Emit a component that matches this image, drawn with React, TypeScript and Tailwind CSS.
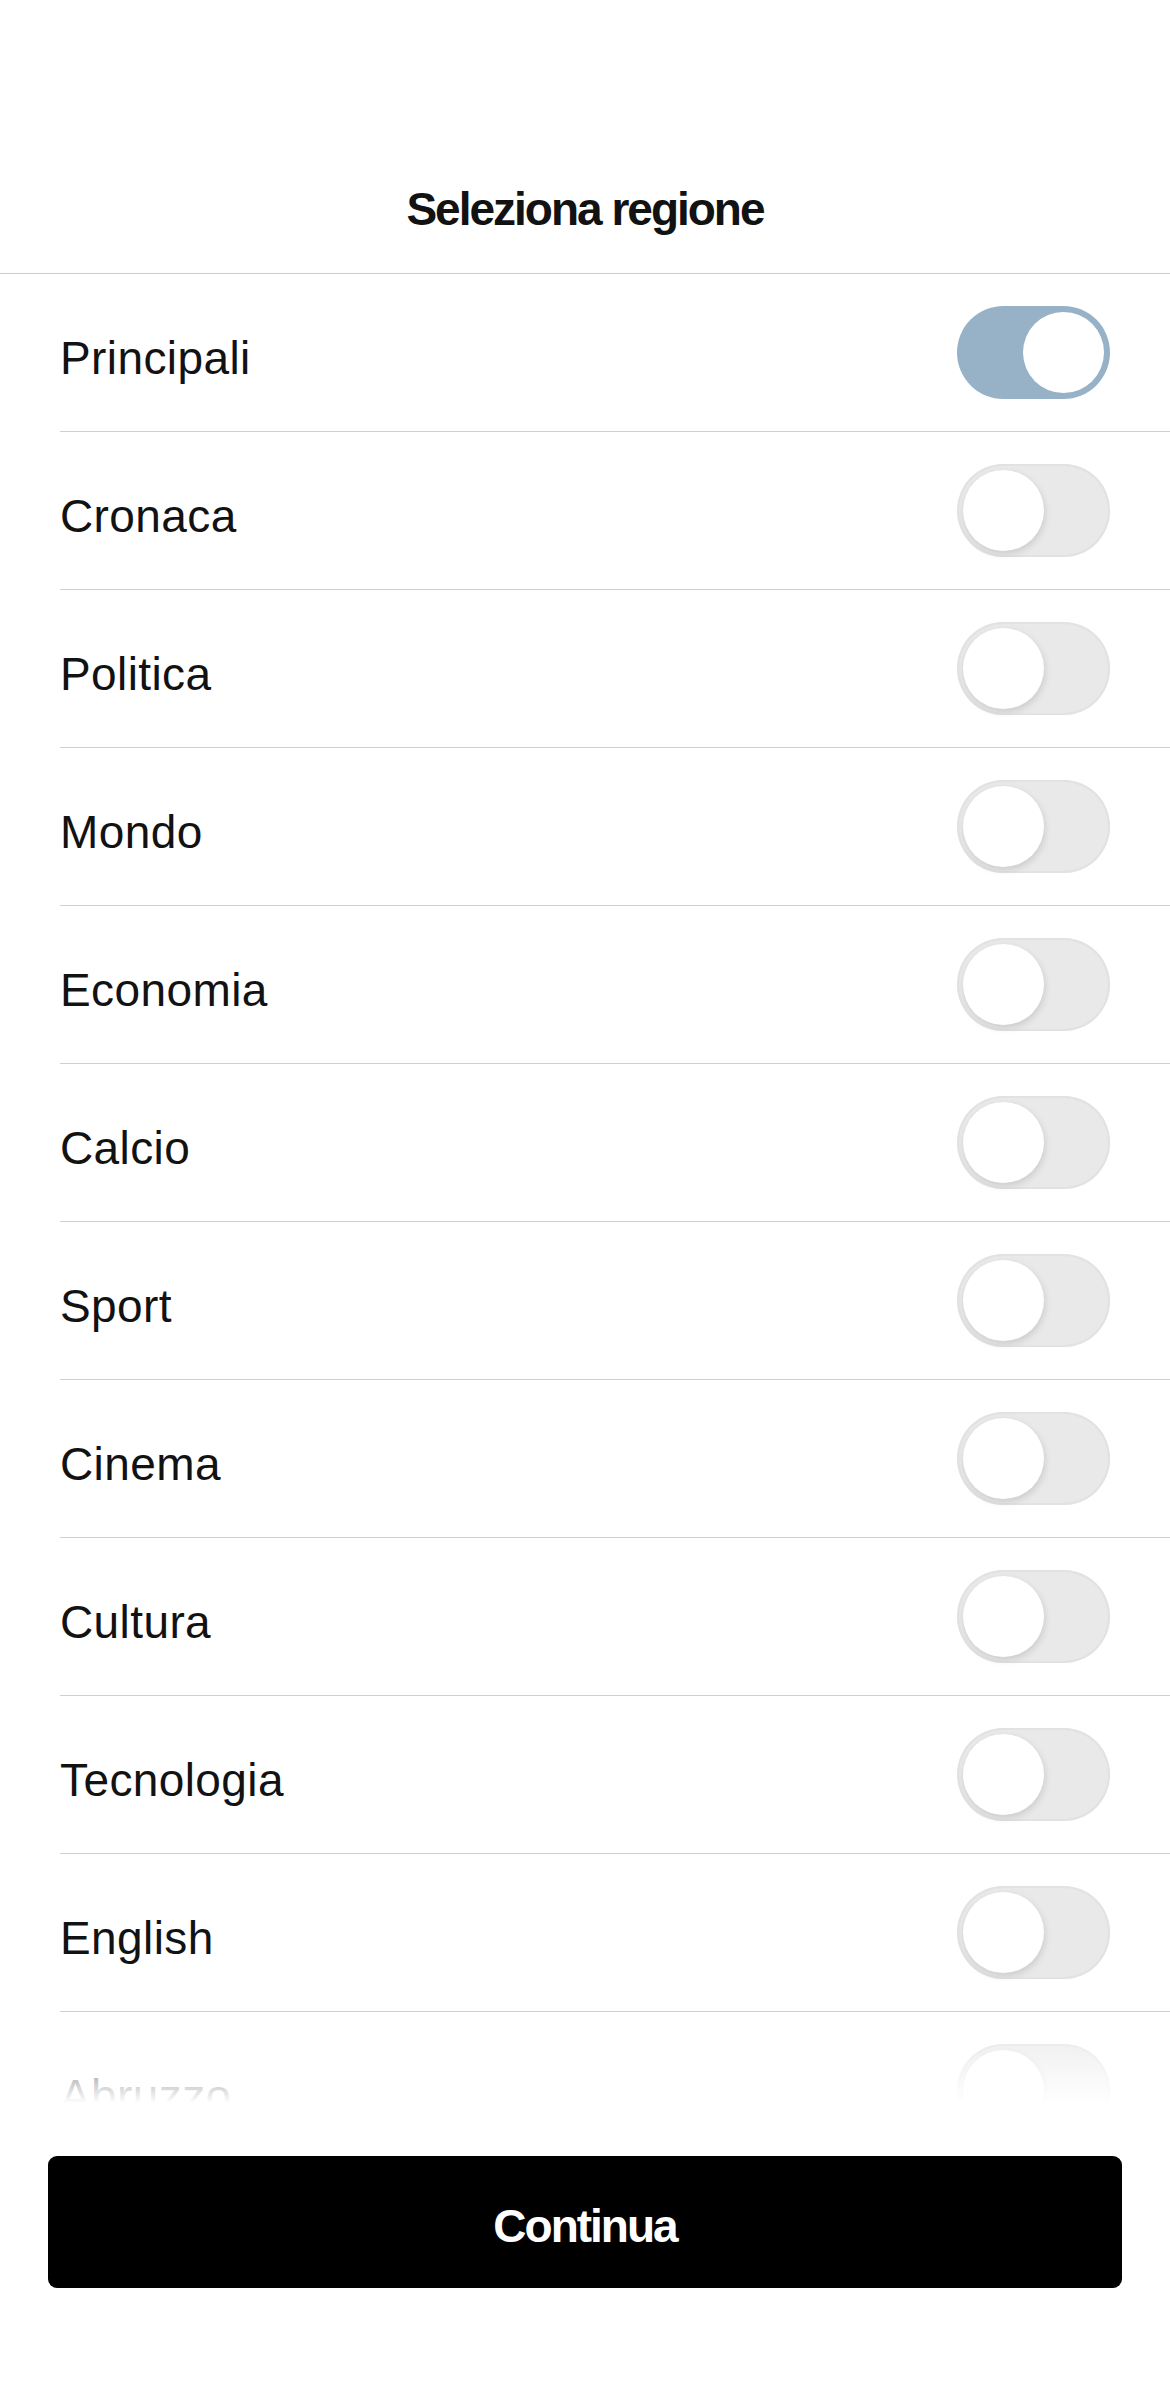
const sections = [
  { label: "Principali", on: true },
  { label: "Cronaca", on: false },
  { label: "Politica", on: false },
  { label: "Mondo", on: false },
  { label: "Economia", on: false },
  { label: "Calcio", on: false },
  { label: "Sport", on: false },
  { label: "Cinema", on: false },
  { label: "Cultura", on: false },
  { label: "Tecnologia", on: false },
  { label: "English", on: false },
  { label: "Abruzzo", on: false },
];

function Toggle({ on }: { on: boolean }) {
  if (on) {
    return (
      <div className="flex h-[93px] w-[153px] shrink-0 items-center justify-end rounded-full bg-[#97b2c7] pr-[6px]">
        <div className="h-[81px] w-[81px] rounded-full bg-white" />
      </div>
    );
  }
  return (
    <div className="flex h-[93px] w-[153px] shrink-0 items-center rounded-full bg-[#e9e9e9] pl-[6px] shadow-[inset_0_0_0_2px_#e2e2e2]">
      <div className="h-[81px] w-[81px] rounded-full bg-white shadow-[1px_3px_7px_rgba(0,0,0,0.13)]" />
    </div>
  );
}

export default function App() {
  return (
    <div
      className="flex h-[2391px] w-[1170px] flex-col bg-white text-[#121212]"
      style={{ fontFamily: '"Liberation Sans", Arial, sans-serif' }}
    >
      <header className="h-[274px] shrink-0 border-b border-[#cccccc] pt-[186px] text-center">
        <h1 className="text-[46px] font-bold leading-none tracking-[-2px]">Seleziona regione</h1>
      </header>

      <div className="relative h-[1829px] shrink-0 overflow-hidden">
        {sections.map((s) => (
          <div
            key={s.label}
            className="ml-[60px] flex h-[158px] items-center justify-between border-b border-[#cfcfcf] pr-[60px]"
          >
            <span className="pt-[10px] text-[46px] leading-none tracking-[0.4px]">{s.label}</span>
            <Toggle on={s.on} />
          </div>
        ))}
        {/* fade at the bottom of the scroll area */}
        <div className="absolute inset-x-0 bottom-0 h-[90px] bg-gradient-to-b from-white/0 to-white" />
      </div>

      <div className="px-[48px] pt-[53px]">
        <button className="flex h-[132px] w-full items-center justify-center rounded-[9px] bg-black pt-[8px] text-[46px] font-bold leading-none tracking-[-2px] text-white">
          Continua
        </button>
      </div>
    </div>
  );
}
